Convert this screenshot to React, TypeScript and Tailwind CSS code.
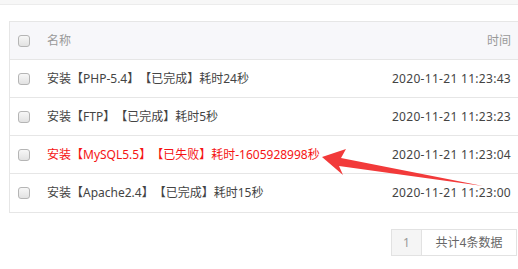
import React from 'react';

const rows = [
  { name: '安装【PHP-5.4】【已完成】耗时24秒', time: '2020-11-21 11:23:43', failed: false },
  { name: '安装【FTP】【已完成】耗时5秒', time: '2020-11-21 11:23:23', failed: false },
  { name: '安装【MySQL5.5】【已失败】耗时-1605928998秒', time: '2020-11-21 11:23:04', failed: true },
  { name: '安装【Apache2.4】【已完成】耗时15秒', time: '2020-11-21 11:23:00', failed: false },
];

function Checkbox() {
  return (
    <span className="block w-[12px] h-[12px] rounded-[3px] border border-[#b5b5b5] bg-gradient-to-b from-[#f7f7f7] to-[#e2e2e2]" />
  );
}

function Arrow() {
  return (
    <svg className="absolute inset-0 pointer-events-none" width="518" height="269" viewBox="0 0 518 269">
      <polygon
        points="322,157 346,149 341,158 483,186 339,166 343,175"
        fill="#f23a3a"
      />
    </svg>
  );
}

export default function App() {
  return (
    <div
      className="relative w-[518px] h-[269px] overflow-hidden bg-white text-[12px] [text-spacing-trim:space-all]"
      style={{ fontFamily: '"Noto Sans", "Noto Sans CJK SC", sans-serif' }}
    >
      {/* top strip */}
      <div className="h-[5px] bg-[#f7f7f7] border-b border-[#ececec]" />

      {/* table */}
      <div className="ml-[9px] mt-[16px] border-l border-t border-b border-[#e6e6e6]">
        <div className="flex items-center h-[38px] bg-[#f7f7fa] border-b border-[#e6e6e6] text-[#999]">
          <div className="pl-[8px] w-[37px]">
            <Checkbox />
          </div>
          <div className="flex-1">名称</div>
          <div className="pr-[7px]">时间</div>
        </div>
        {rows.map((row, i) => (
          <div
            key={row.time}
            className={`flex items-center h-[38px] ${i < rows.length - 1 ? 'border-b border-[#e6e6e6]' : ''}`}
          >
            <div className="pl-[8px] w-[37px]">
              <Checkbox />
            </div>
            <div className={`flex-1 ${row.failed ? 'text-[#f51414]' : 'text-[#444]'}`}>{row.name}</div>
            <div className="pr-[7px] text-[#444] tracking-[0.3px]">{row.time}</div>
          </div>
        ))}
      </div>

      {/* pagination */}
      <div className="flex justify-end mt-[16px] mr-[1px]">
        <div className="flex h-[27px] border border-[#e2e2e2]">
          <span className="flex items-center justify-center w-[30px] bg-[#f5f5f5] text-[#999] border-r border-[#e2e2e2]">1</span>
          <span className="flex items-center justify-center w-[94px] text-[#666]">共计4条数据</span>
        </div>
      </div>

      <Arrow />
    </div>
  );
}
